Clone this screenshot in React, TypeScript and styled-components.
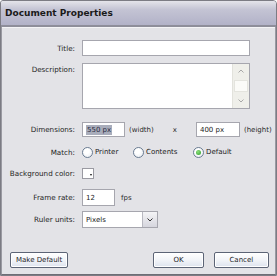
import React from "react";
import styled, { createGlobalStyle } from "styled-components";

const GlobalStyle = createGlobalStyle`
  html, body { margin: 0; padding: 0; background: #ffffff; }
  body { font-family: "DejaVu Sans", Verdana, sans-serif; }
`;

const Window = styled.div`
  width: 277px;
  height: 276px;
  box-sizing: border-box;
  border: 1px solid #7c7c84;
  border-radius: 3px 4px 0 0;
  background: #e3e3e7;
  display: flex;
  flex-direction: column;
  overflow: hidden;
`;

const TitleBar = styled.div`
  height: 24px;
  flex: none;
  display: flex;
  align-items: center;
  padding-left: 4px;
  background: linear-gradient(#e4e4ea 0%, #c4c4d4 35%, #b2b2c8 100%);
  border-bottom: 2px solid #8e8e9a;
  box-shadow: 0 1px 0 #f4f4f6;
  font-size: 9px;
  font-weight: bold;
  color: #1a1a1a;
`;

const Body = styled.div`
  flex: 1;
  display: flex;
  flex-direction: column;
  padding: 13px 0 0 0;
  border-left: 1px solid #9a9aa2;
  border-right: 1px solid #9a9aa2;
  border-bottom: 1px solid #6e6e76;
`;

const Row = styled.div<{ $h: number; $mt: number; $top?: boolean }>`
  height: ${(p) => p.$h}px;
  margin-top: ${(p) => p.$mt}px;
  display: grid;
  grid-template-columns: 73px auto;
  column-gap: 7px;
  align-items: ${(p) => (p.$top ? "start" : "center")};
`;

const Label = styled.div<{ $pt?: number }>`
  text-align: right;
  font-size: 7.2px;
  color: #1e1e1e;
  white-space: nowrap;
  padding-top: ${(p) => p.$pt || 0}px;
`;

const Controls = styled.div`
  display: flex;
  align-items: center;
  height: 100%;
`;

const TextBox = styled.div<{ $w: number; $h?: number; $ml?: number }>`
  width: ${(p) => p.$w}px;
  height: ${(p) => p.$h || 15}px;
  margin-left: ${(p) => p.$ml || 0}px;
  box-sizing: border-box;
  background: #ffffff;
  border: 1px solid #a6a6ae;
  display: flex;
  align-items: center;
  padding-left: 3px;
  font-size: 7px;
  color: #222;
  flex: none;
`;

const Selected = styled.span`
  background: #a9adbb;
  color: #2a2a40;
  padding: 1px 1px;
`;

const Text = styled.span<{ $ml?: number }>`
  font-size: 7px;
  color: #2a2a2a;
  margin-left: ${(p) => p.$ml || 0}px;
  white-space: nowrap;
`;

const Area = styled.div`
  width: 168px;
  height: 46px;
  box-sizing: border-box;
  background: #ffffff;
  border: 1px solid #a6a6ae;
  display: flex;
  justify-content: flex-end;
`;

const ScrollBar = styled.div`
  width: 16px;
  display: flex;
  flex-direction: column;
  background: #efefea;
  border-left: 1px solid #e2e2dc;
`;

const ScrollArrow = styled.div`
  height: 14px;
  display: flex;
  align-items: center;
  justify-content: center;
`;

const ScrollThumb = styled.div`
  flex: 1;
  margin: 2px 1px;
  background: #fbfbf8;
  border: 1px solid #e4e4de;
`;

const RadioItem = styled.label<{ $w: number }>`
  display: flex;
  align-items: center;
  width: ${(p) => p.$w}px;
  flex: none;
  font-size: 7px;
  color: #222;
  gap: 2px;
`;

const RadioCircle = styled.span<{ $on?: boolean }>`
  width: 11px;
  height: 11px;
  box-sizing: border-box;
  border-radius: 50%;
  border: 1px solid #6a7c92;
  background: radial-gradient(circle at 40% 35%, #ffffff 30%, #e4e8ee 100%);
  display: flex;
  align-items: center;
  justify-content: center;
  &::after {
    content: "";
    display: ${(p) => (p.$on ? "block" : "none")};
    width: 5px;
    height: 5px;
    border-radius: 50%;
    background: radial-gradient(circle at 40% 35%, #8be07a, #2e9a2a);
  }
`;

const Swatch = styled.div`
  width: 12px;
  height: 11px;
  box-sizing: border-box;
  border: 1px solid #9a9aa2;
  background: #ffffff;
  position: relative;
  &::after {
    content: "";
    position: absolute;
    right: 1px;
    bottom: 2px;
    border-left: 1.5px solid transparent;
    border-right: 1.5px solid transparent;
    border-top: 2px solid #111;
  }
`;

const Select = styled.div`
  width: 76px;
  height: 17px;
  box-sizing: border-box;
  background: #ffffff;
  border: 1px solid #a6a6ae;
  display: flex;
  align-items: center;
  font-size: 7px;
  color: #222;
`;

const SelectValue = styled.span`
  flex: 1;
  padding-left: 3px;
`;

const SelectButton = styled.div`
  width: 15px;
  height: 100%;
  box-sizing: border-box;
  border-left: 1px solid #b8b8c0;
  background: linear-gradient(#f4f4f6, #d6d6de);
  display: flex;
  align-items: center;
  justify-content: center;
`;

const ButtonRow = styled.div`
  margin-top: auto;
  margin-bottom: 6px;
  padding: 0 6px 0 8px;
  display: flex;
  align-items: center;
`;

const Button = styled.div<{ $w: number; $ml?: number }>`
  width: ${(p) => p.$w}px;
  height: 16px;
  margin-left: ${(p) => p.$ml || 0}px;
  box-sizing: border-box;
  border: 1px solid #5c6476;
  border-radius: 2px;
  background: linear-gradient(#ffffff 0%, #f2f4f8 50%, #dde3ee 100%);
  box-shadow: inset 0 0 0 1px #ffffff;
  display: flex;
  align-items: center;
  justify-content: center;
  font-size: 7px;
  color: #1e1e28;
`;

const Chevron = ({ up, color = "#9a9a9a" }: { up?: boolean; color?: string }) => (
  <svg width="6" height="4" viewBox="0 0 6 4">
    <path d={up ? "M0.5 3.5 L3 1 L5.5 3.5" : "M0.5 0.5 L3 3 L5.5 0.5"} fill="none" stroke={color} strokeWidth="1" />
  </svg>
);

export default function App() {
  return (
    <>
      <GlobalStyle />
      <Window>
        <TitleBar>Document Properties</TitleBar>
        <Body>
          <Row $h={16} $mt={0}>
            <Label>Title:</Label>
            <Controls>
              <TextBox $w={168} $h={16} />
            </Controls>
          </Row>

          <Row $h={46} $mt={7} $top>
            <Label $pt={2}>Description:</Label>
            <Area>
              <ScrollBar>
                <ScrollArrow>
                  <Chevron up color="#a8a8a8" />
                </ScrollArrow>
                <ScrollThumb />
                <ScrollArrow>
                  <Chevron color="#a8a8a8" />
                </ScrollArrow>
              </ScrollBar>
            </Area>
          </Row>

          <Row $h={15} $mt={13}>
            <Label>Dimensions:</Label>
            <Controls>
              <TextBox $w={43}>
                <Selected>550 px</Selected>
              </TextBox>
              <Text $ml={4}>(width)</Text>
              <Text $ml={19}>x</Text>
              <TextBox $w={44} $ml={19}>
                400 px
              </TextBox>
              <Text $ml={4}>(height)</Text>
            </Controls>
          </Row>

          <Row $h={14} $mt={8}>
            <Label>Match:</Label>
            <Controls>
              <RadioItem $w={51}>
                <RadioCircle />
                Printer
              </RadioItem>
              <RadioItem $w={60}>
                <RadioCircle />
                Contents
              </RadioItem>
              <RadioItem $w={50}>
                <RadioCircle $on />
                Default
              </RadioItem>
            </Controls>
          </Row>

          <Row $h={12} $mt={8}>
            <Label>Background color:</Label>
            <Controls>
              <Swatch />
            </Controls>
          </Row>

          <Row $h={17} $mt={10}>
            <Label>Frame rate:</Label>
            <Controls>
              <TextBox $w={33} $h={17}>
                12
              </TextBox>
              <Text $ml={6}>fps</Text>
            </Controls>
          </Row>

          <Row $h={17} $mt={5}>
            <Label>Ruler units:</Label>
            <Controls>
              <Select>
                <SelectValue>Pixels</SelectValue>
                <SelectButton>
                  <Chevron color="#333" />
                </SelectButton>
              </Select>
            </Controls>
          </Row>

          <ButtonRow>
            <Button $w={59}>Make Default</Button>
            <Button $w={51} $ml={85}>
              OK
            </Button>
            <Button $w={56} $ml={10}>
              Cancel
            </Button>
          </ButtonRow>
        </Body>
      </Window>
    </>
  );
}
